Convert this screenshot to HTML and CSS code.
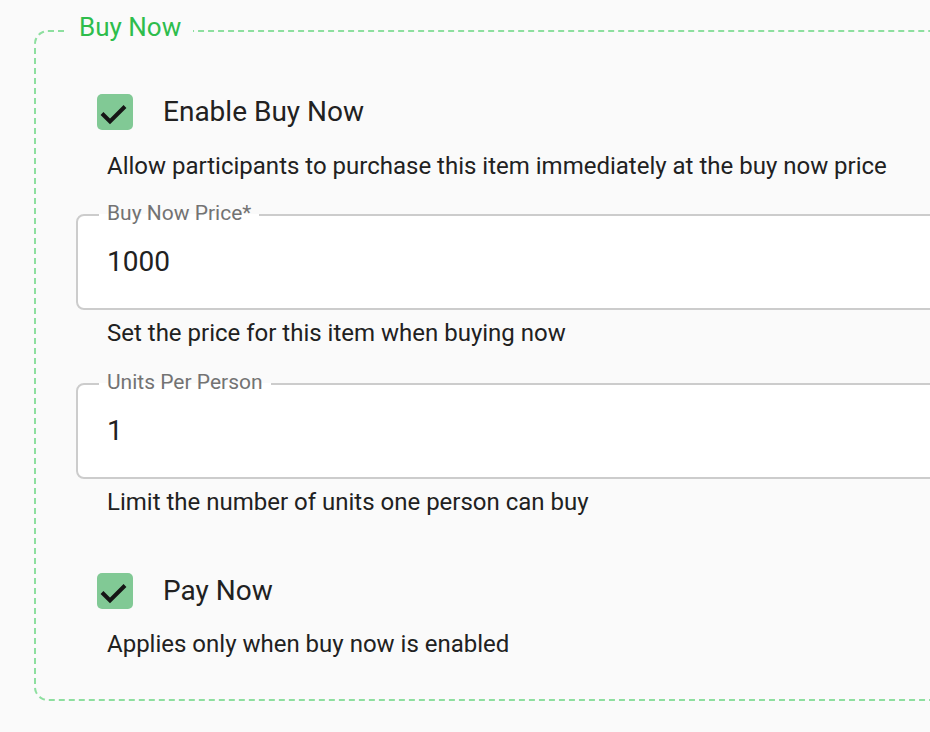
FILE: index.html
```html
<!DOCTYPE html>
<html>
<head>
<meta charset="utf-8">
<link rel="stylesheet" href="styles.css">
</head>
<body>
<div class="page">
<fieldset class="group">
  <legend class="group-legend">Buy Now</legend>
  <div class="group-body">
    <label class="check-row">
      <span class="check-box"><svg viewBox="0 0 36 36" width="36" height="36"><path d="M5 19.5l8 8L28 12.5" fill="none" stroke="#151515" stroke-width="4"/></svg></span>
      <span class="check-label">Enable Buy Now</span>
    </label>
    <p class="helper first">Allow participants to purchase this item immediately at the buy now price</p>

    <fieldset class="field">
      <legend class="field-legend">Buy Now Price*</legend>
      <div class="field-value">1000</div>
    </fieldset>
    <p class="helper">Set the price for this item when buying now</p>

    <fieldset class="field">
      <legend class="field-legend">Units Per Person</legend>
      <div class="field-value">1</div>
    </fieldset>
    <p class="helper">Limit the number of units one person can buy</p>

    <label class="check-row second">
      <span class="check-box"><svg viewBox="0 0 36 36" width="36" height="36"><path d="M5 19.5l8 8L28 12.5" fill="none" stroke="#151515" stroke-width="4"/></svg></span>
      <span class="check-label">Pay Now</span>
    </label>
    <p class="helper last">Applies only when buy now is enabled</p>
  </div>
</fieldset>
</div>
</body>
</html>
```
FILE: styles.css
```css
html, body {
  margin: 0;
  padding: 0;
  background: #fafafa;
  font-family: Roboto, "Noto Sans", sans-serif;
  color: #212121;
}
.page {
  width: 930px;
  height: 732px;
  overflow: hidden;
  padding-top: 12px;
  box-sizing: border-box;
}
.group {
  margin: 0 0 0 34px;
  width: 960px;
  height: 689px;
  box-sizing: border-box;
  border: 2px dashed #8ddf9f;
  border-radius: 14px;
  padding: 0 0 0 31px;
}
.group-legend {
  color: #2ebd4c;
  font-size: 26px;
  padding: 0 12px 8px;
  line-height: 30px;
}
.group-body {
  margin-left: -31px;
  padding: 44px 0 0 40px;
}
.check-row {
  display: flex;
  align-items: center;
  gap: 30px;
  margin-left: 21px;
  height: 36px;
}
.check-row.second {
  margin-top: 57px;
}
.check-box {
  width: 36px;
  height: 36px;
  border-radius: 5px;
  background: #81c995;
  display: block;
}
.check-box svg {
  display: block;
}
.check-label {
  font-size: 28px;
  line-height: 32px;
  color: #212121;
}
.helper {
  margin: 9px 0 0 31px;
  font-size: 24px;
  line-height: 28px;
  color: #212121;
}
.helper.first {
  margin-top: 22px;
}
.helper.last {
  margin-top: 21px;
}
.field {
  margin: 21px 0 0 0;
  border: 2px solid #cccccc;
  border-radius: 8px;
  background: #ffffff;
  height: 109px;
  box-sizing: border-box;
  padding: 0 0 0 21px;
}
.helper + .field {
  margin-top: 23px;
}
.helper.first + .field {
  margin-top: 21px;
}
.field-legend {
  font-size: 21px;
  color: #737373;
  padding: 0 8px 4px;
  line-height: 24px;
}
.field-value {
  font-size: 28px;
  line-height: 32px;
  color: #212121;
  padding-left: 8px;
  margin-top: 17px;
}
```
